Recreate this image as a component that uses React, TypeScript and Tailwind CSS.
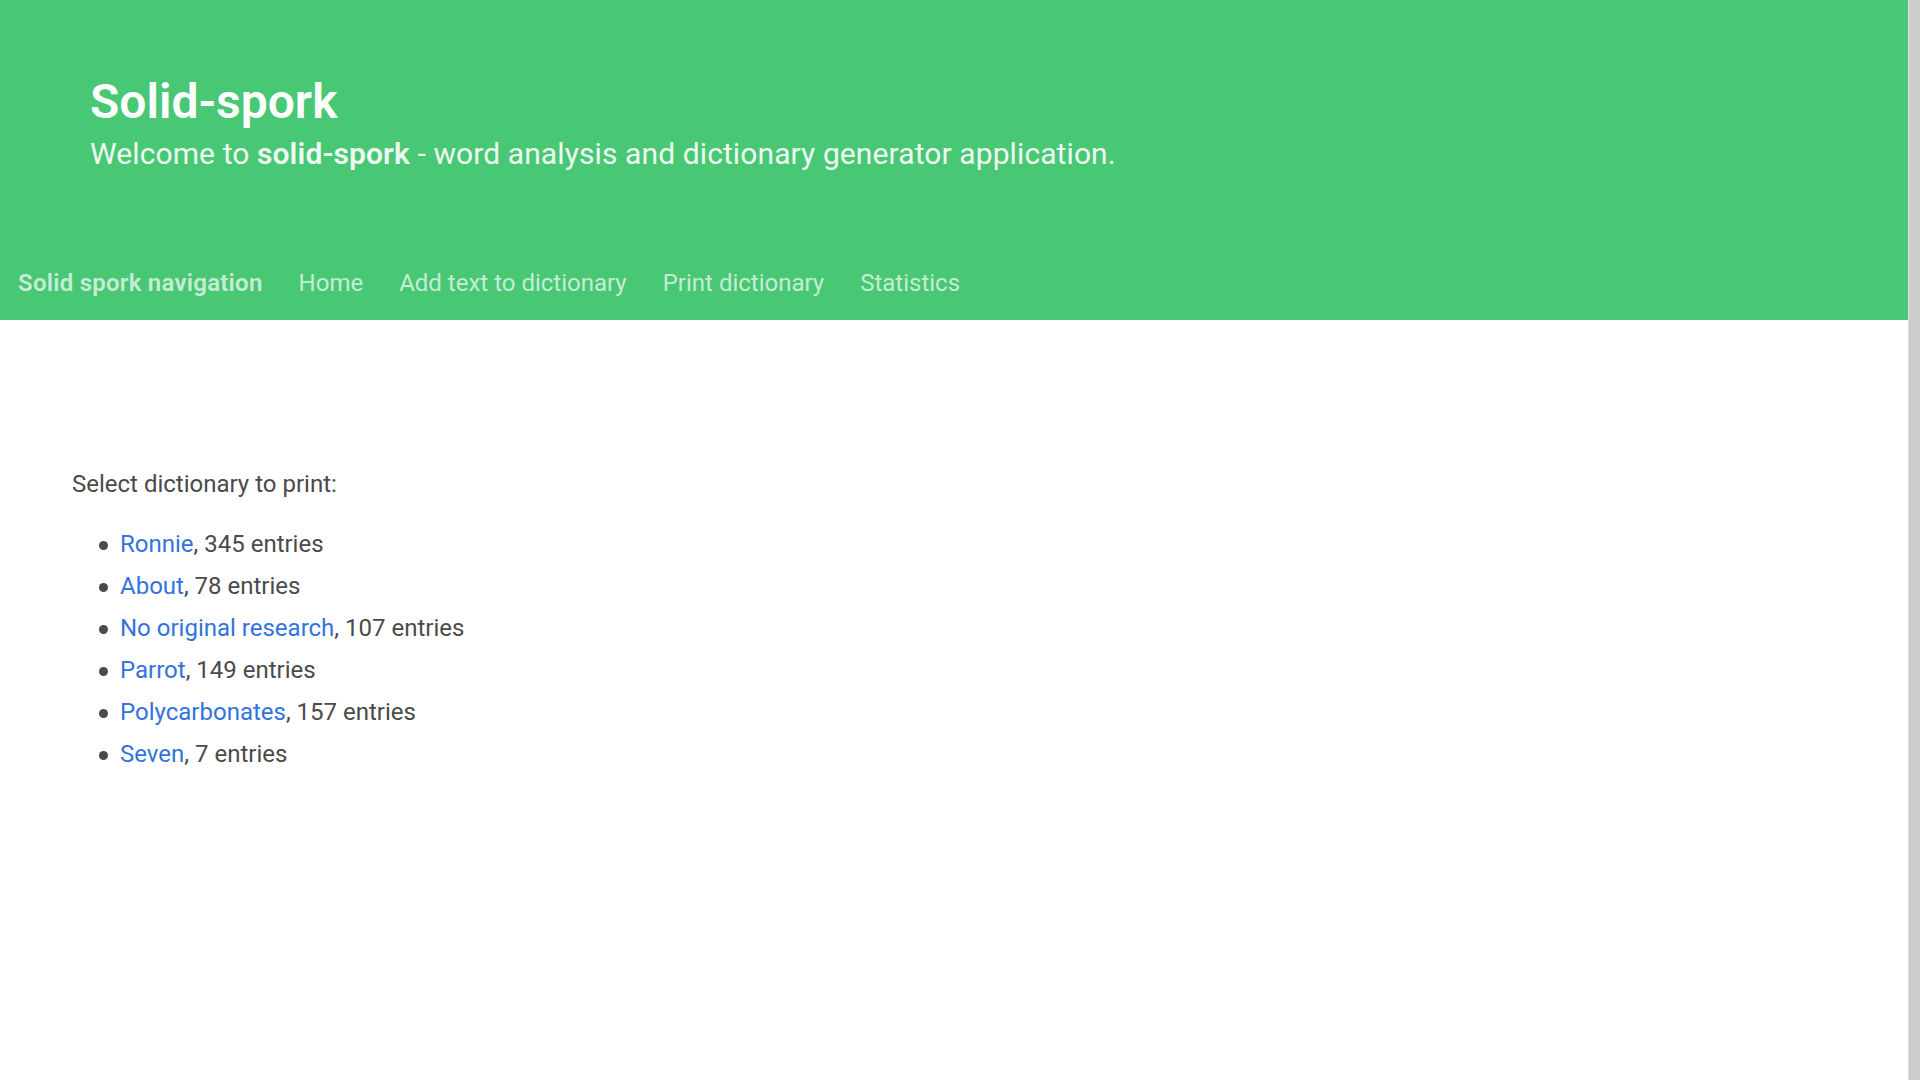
import React from "react";

const items = [
  { name: "Ronnie", count: 345 },
  { name: "About", count: 78 },
  { name: "No original research", count: 107 },
  { name: "Parrot", count: 149 },
  { name: "Polycarbonates", count: 157 },
  { name: "Seven", count: 7 },
];

export default function App() {
  return (
    <div
      className="flex w-full h-[1080px] overflow-hidden bg-white"
      style={{ fontFamily: 'Roboto, "Open Sans", sans-serif' }}
    >
      <div className="flex-1 flex flex-col">
        <header className="bg-[#48c774] h-[320px] flex flex-col">
          <div className="flex-1 pt-[75px] pl-[90px]">
            <h1 className="text-[48px] leading-[54px] font-semibold text-white">Solid-spork</h1>
            <p className="mt-[6px] text-[30px] leading-[37.5px] text-white/90 tracking-[0.1px]">
              Welcome to <strong className="font-semibold">solid-spork</strong> - word analysis and dictionary generator application.
            </p>
          </div>
          <nav className="h-[78px] pt-[4px] flex items-stretch text-[24px] text-white/70">
            <a className="flex items-center px-[18px] font-semibold tracking-[0.25px]">Solid spork navigation</a>
            <a className="flex items-center px-[18px]">Home</a>
            <a className="flex items-center px-[18px]">Add text to dictionary</a>
            <a className="flex items-center px-[18px]">Print dictionary</a>
            <a className="flex items-center px-[18px]">Statistics</a>
          </nav>
        </header>
        <main className="pt-[146px] px-[72px] text-[24px] leading-[36px] text-[#4a4a4a]">
          <p className="mb-[24px]">Select dictionary to print:</p>
          <ul className="ml-[48px] flex flex-col gap-[6px]">
            {items.map((it) => (
              <li key={it.name} className="flex items-start">
                <span className="mt-[15px] -ml-[21px] mr-[12px] w-[9px] h-[9px] rounded-full bg-[#4a4a4a] shrink-0" />
                <span>
                  <a className="text-[#3273dc] cursor-pointer">{it.name}</a>, {it.count} entries
                </span>
              </li>
            ))}
          </ul>
        </main>
      </div>
      <div className="w-[12px] h-full bg-[#cdcdcd] border-l border-[#e0e0e0]" />
    </div>
  );
}
